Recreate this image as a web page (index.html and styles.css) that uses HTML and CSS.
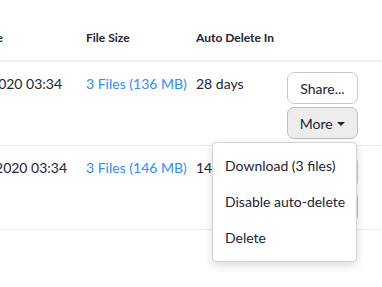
FILE: index.html
```html
<!DOCTYPE html>
<html lang="en">
<head>
    <meta charset="UTF-8">
    <meta name="viewport" content="width=device-width, initial-scale=1.0">
    <title>Recordings</title>
    <link rel="stylesheet" href="styles.css">
</head>
<body>
    <div class="recordings">
        <div class="rec-row rec-head">
            <div class="col-date">Start Time</div>
            <div class="col-size">File Size</div>
            <div class="col-del">Auto Delete In</div>
            <div class="col-act"></div>
        </div>

        <div class="rec-row">
            <div class="col-date">Mar 3, 2020 03:34</div>
            <div class="col-size"><a href="#">3 Files (136 MB)</a></div>
            <div class="col-del">28 days</div>
            <div class="col-act">
                <button class="btn">Share...</button>
                <div class="more-wrap">
                    <button class="btn btn-more">More <span class="caret"></span></button>
                    <ul class="dropdown">
                        <li>Download (3 files)</li>
                        <li>Disable auto-delete</li>
                        <li>Delete</li>
                    </ul>
                </div>
            </div>
        </div>

        <div class="rec-row">
            <div class="col-date date-2">Mar 3, 2020 03:34</div>
            <div class="col-size"><a href="#">3 Files (146 MB)</a></div>
            <div class="col-del">14 days</div>
            <div class="col-act">
                <button class="btn">Share...</button>
                <button class="btn btn-more">More <span class="caret"></span></button>
            </div>
        </div>
    </div>
</body>
</html>
```

FILE: styles.css
```css
html, body {
    min-height: 100%;
    height: 100%;
}

body {
    font-family: Lato, "Open Sans", sans-serif;
    background-color: #fff;
    color: #232333;
    margin: 0;
    padding: 0;
}

.recordings {
    margin-left: -53px;
}

.rec-row {
    display: grid;
    grid-template-columns: 139px 110px 91px 71px;
    font-size: 14px;
    line-height: 24px;
    padding: 10px 0 6px;
    height: 67px;
    border-bottom: 1px solid #ededed;
}

.rec-head {
    height: 20px;
    padding: 28px 0 12px;
    line-height: 20px;
    font-size: 12px;
    font-weight: 700;
    border-bottom: 2px solid #ededed;
}

.rec-head .col-date {
    margin-left: 1px;
}

.col-date {
    white-space: nowrap;
}

.date-2 {
    padding-left: 5px;
}

.col-size a {
    color: #2d8cff;
    text-decoration: none;
}

.col-act {
    display: flex;
    flex-direction: column;
    gap: 3px;
}

.btn {
    width: 71px;
    height: 32px;
    border: 1px solid #c9c9d6;
    border-radius: 7px;
    background-color: #fff;
    color: #232333;
    font-family: Lato, sans-serif;
    font-size: 14px;
    padding: 0;
    cursor: pointer;
}

.btn-more {
    background-color: #ededed;
    border-color: #bdbdc6;
}

.caret {
    display: inline-block;
    width: 0;
    height: 0;
    border-left: 4px solid transparent;
    border-right: 4px solid transparent;
    border-top: 4px solid #232333;
    vertical-align: middle;
    margin-left: 1px;
    margin-bottom: 2px;
}

.more-wrap {
    position: relative;
}

.dropdown {
    position: absolute;
    top: 35px;
    right: 1px;
    width: 143px;
    margin: 0;
    padding: 5px 0;
    list-style: none;
    background-color: #fff;
    border: 1px solid #d4d4d4;
    border-radius: 4px;
    box-shadow: 0 3px 10px rgba(0, 0, 0, 0.15);
    z-index: 2;
}

.dropdown li {
    height: 36px;
    line-height: 36px;
    padding: 0 12px;
    font-size: 14px;
    white-space: nowrap;
}
```
